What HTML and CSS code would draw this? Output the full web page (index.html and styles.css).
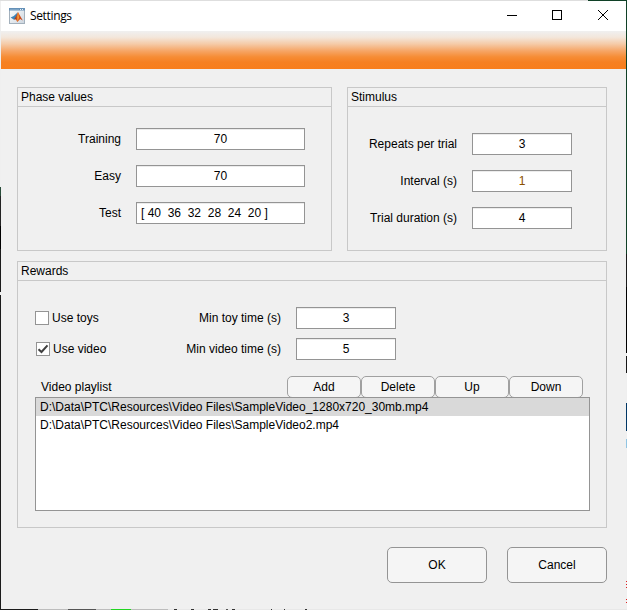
FILE: index.html
```html
<!DOCTYPE html>
<html lang="en">
<head>
<meta charset="utf-8">
<title>Settings</title>
<link rel="stylesheet" href="styles.css">
</head>
<body>
<div class="desktop">
<main class="window">
  <header class="titlebar">
    <svg class="app-icon" width="16" height="16" viewBox="0 0 16 16">
      <defs>
        <linearGradient id="face" x1="0" y1="0" x2="1" y2="1"><stop offset="0" stop-color="#fff"/><stop offset="1" stop-color="#ccd5de"/></linearGradient>
        <linearGradient id="peak" x1="0" y1="0" x2="1" y2="0"><stop offset="0" stop-color="#8a2a1a"/><stop offset=".45" stop-color="#e8601c"/><stop offset="1" stop-color="#b5391a"/></linearGradient>
      </defs>
      <rect x=".5" y=".5" width="15" height="15" fill="url(#face)" stroke="#a3b0bc"/>
      <path d="M0 0H16V2.5H0Z" fill="#6591b8"/>
      <path d="M1 1H10V2H1Z" fill="#7fa5c6"/>
      <path d="M11 1H12V2H11ZM13 1H14V2H13Z" fill="#e4eff7"/>
      <path d="M1.6 9.6L4.8 8L8.8 4.2L7.6 9.2L5 11.8Z" fill="#3f84b8"/>
      <path d="M5 11.6L7 8.4L9 4L11.2 8L13.8 12.6L11.2 11L8.3 14L7 11.6Z" fill="url(#peak)"/>
      <path d="M9.1 4.2L10 9.8L8.4 13.4L8.3 8.5Z" fill="#f4a03c"/>
    </svg>
    <h1 class="title">Settings</h1>
    <svg class="controls" width="138" height="30" viewBox="0 0 138 30" fill="none" stroke="#000">
      <path d="M19 14.5H29"/>
      <rect x="64.5" y="9.5" width="9" height="9"/>
      <path d="M110 9L120 19M120 9L110 19"/>
    </svg>
  </header>
  <div class="banner"></div>
  <div class="content">
    <div class="top">
      <section class="panel phase">
        <h2>Phase values</h2>
        <div class="fields">
          <label>Training</label><div class="input">70</div>
          <label>Easy</label><div class="input">70</div>
          <label>Test</label><div class="input left">[ 40  36  32  28  24  20 ]</div>
        </div>
      </section>
      <section class="panel stimulus">
        <h2>Stimulus</h2>
        <div class="fields">
          <label>Repeats per trial</label><div class="input">3</div>
          <label>Interval (s)</label><div class="input amber">1</div>
          <label>Trial duration (s)</label><div class="input">4</div>
        </div>
      </section>
    </div>
    <section class="panel rewards">
      <h2>Rewards</h2>
      <div class="options">
        <div class="option"><span class="check"></span><span class="name">Use toys</span><label>Min toy time (s)</label><div class="input">3</div></div>
        <div class="option checked"><span class="check"><svg width="12" height="12" viewBox="0 0 12 12"><path d="M1.5 6.2L4.5 9L10.5 2.4" fill="none" stroke="#404040" stroke-width="2"/></svg></span><span class="name">Use video</span><label>Min video time (s)</label><div class="input">5</div></div>
      </div>
      <div class="playlist-head">
        <span class="caption">Video playlist</span>
        <button class="small">Add</button><button class="small">Delete</button><button class="small">Up</button><button class="small">Down</button>
      </div>
      <ul class="playlist">
        <li class="selected">D:\Data\PTC\Resources\Video Files\SampleVideo_1280x720_30mb.mp4</li>
        <li>D:\Data\PTC\Resources\Video Files\SampleVideo2.mp4</li>
      </ul>
    </section>
    <footer class="actions"><button>OK</button><button>Cancel</button></footer>
  </div>
</main>
</div>
</body>
</html>
```

FILE: styles.css
```css
* { box-sizing: border-box; }
body { margin: 0; overflow: hidden; font: 12px/18px "Liberation Sans", Arial, sans-serif; color: #000; }
h1, h2, ul { margin: 0; padding: 0; font-size: inherit; font-weight: normal; list-style: none; }

/* The window leaves a one-pixel rim of the desktop visible. */
.desktop {
  width: 627px; height: 610px; padding: 1px;
  background:
    linear-gradient(90deg, #1b1b1b 38px, #bdbdbd 38px 68px, #555 68px 96px, #bdbdbd 96px 111px, #22d522 111px 131px, #bdbdbd 131px 168px, #e8e8e8 168px 174px, #333 174px 177px, #e8e8e8 177px 191px, #333 191px 194px, #e8e8e8 194px 208px, #333 208px 211px, #e8e8e8 211px 213px, #333 213px 218px, #e8e8e8 218px 226px, #555 226px 228px, #e8e8e8 228px 232px, #333 232px 235px, #e8e8e8 235px 271px, #333 271px 272px, #e8e8e8 272px 284px, #333 284px 285px, #e8e8e8 285px 305px, #333 305px 307px, #e8e8e8 307px) 0 609px / 627px 1px no-repeat,
    linear-gradient(90deg, #dedede 588px, #104127 588px) 0 0 / 627px 1px no-repeat,
    linear-gradient(#efefef 187px, #294d3a 187px 196px, #232323 196px 226px, #000 226px 249px, #1b1b1b 249px 292px, #efefef 292px 295px, #1b1b1b 295px) 0 0 / 1px 610px no-repeat,
    linear-gradient(#104127 254px, #1b1b1b 254px 287px, #000 287px 353px, #efefef 353px 356px, #171717 356px 373px, #efefef 373px 403px, #003765 403px 431px, #efefef 431px 439px, #91c5e3 439px 448px, #efefef 448px 581px, #d22 581px 582px, #efefef 582px 584px, #d22 584px 585px, #efefef 585px 587px, #d22 587px 588px, #efefef 588px 599px, #d22 599px 600px, #efefef 600px 602px, #d22 602px 603px, #efefef 603px) 626px 0 / 1px 610px no-repeat;
}
.window { height: 608px; background: #f0f0f0; }
.titlebar { display: flex; height: 30px; padding: 0 0 0 8px; align-items: center; background: #fff; }
.app-icon { margin-top: -1px; }
.title { margin-left: 5px; font: 12px/18px "Open Sans", "Noto Sans", sans-serif; letter-spacing: -.35px; }
.controls { margin-left: auto; }
.banner { height: 38px; background: linear-gradient(#f0f0f0, #f3e7dc 16%, #f5cba8 34%, #f6a667 52%, #f68d36 68%, #f68022 82%, #f87e1c); }
.content { padding: 18px 19px 0 16px; }
.top { display: flex; gap: 15px; }
.panel { border: 1px solid #c8c8c8; }
.panel h2 { height: 19px; padding-left: 3px; border-bottom: 1px solid #c8c8c8; }
.phase { width: 315px; height: 164px; }
.stimulus { width: 260px; height: 164px; }
.fields { display: grid; row-gap: 15px; column-gap: 15px; }
.phase .fields { grid-template-columns: 103px 169px; padding-top: 21px; }
.stimulus .fields { grid-template-columns: 109px 100px; padding-top: 26px; }
label { text-align: right; line-height: 22px; white-space: nowrap; }
.input { height: 22px; border: 1px solid #949494; background: #fff; box-shadow: inset 0 1px #ececec; text-align: center; line-height: 20px; white-space: pre; }
.input.left { padding-left: 4px; text-align: left; }
.amber { color: #8a5000; }
.rewards { height: 267px; margin-top: 10px; }
.options { display: grid; row-gap: 9px; padding: 26px 0 0 17px; }
.option { display: grid; grid-template-columns: 14px 90px 142px 15px 100px; align-items: center; }
.option .name { padding-left: 3px; }
.option .input { grid-column: 5; }
.checked { padding-left: 1px; grid-template-columns: 14px 89px 142px 15px 100px; }
.check { width: 14px; height: 14px; border: 1px solid #949494; background: #fff; }
.check svg { display: block; }
.playlist-head { display: flex; height: 21px; margin-top: 16px; padding-left: 23px; }
.caption { width: 246px; line-height: 22px; }
button { width: 100px; height: 36px; padding: 0; border: 1px solid #949494; border-radius: 5px; background: #f5f5f5; color: #000; font: inherit; }
.small { width: 74px; height: 22px; line-height: 20px; border-color: #a0a0a0; }
.playlist { position: relative; width: 555px; height: 114px; margin-left: 17px; border: 1px solid #949494; background: #fff; }
.playlist li { height: 18px; padding-left: 4px; }
.selected { background: #d9d9d9; }
.actions { display: flex; justify-content: flex-end; gap: 20px; margin-top: 19px; }
```
